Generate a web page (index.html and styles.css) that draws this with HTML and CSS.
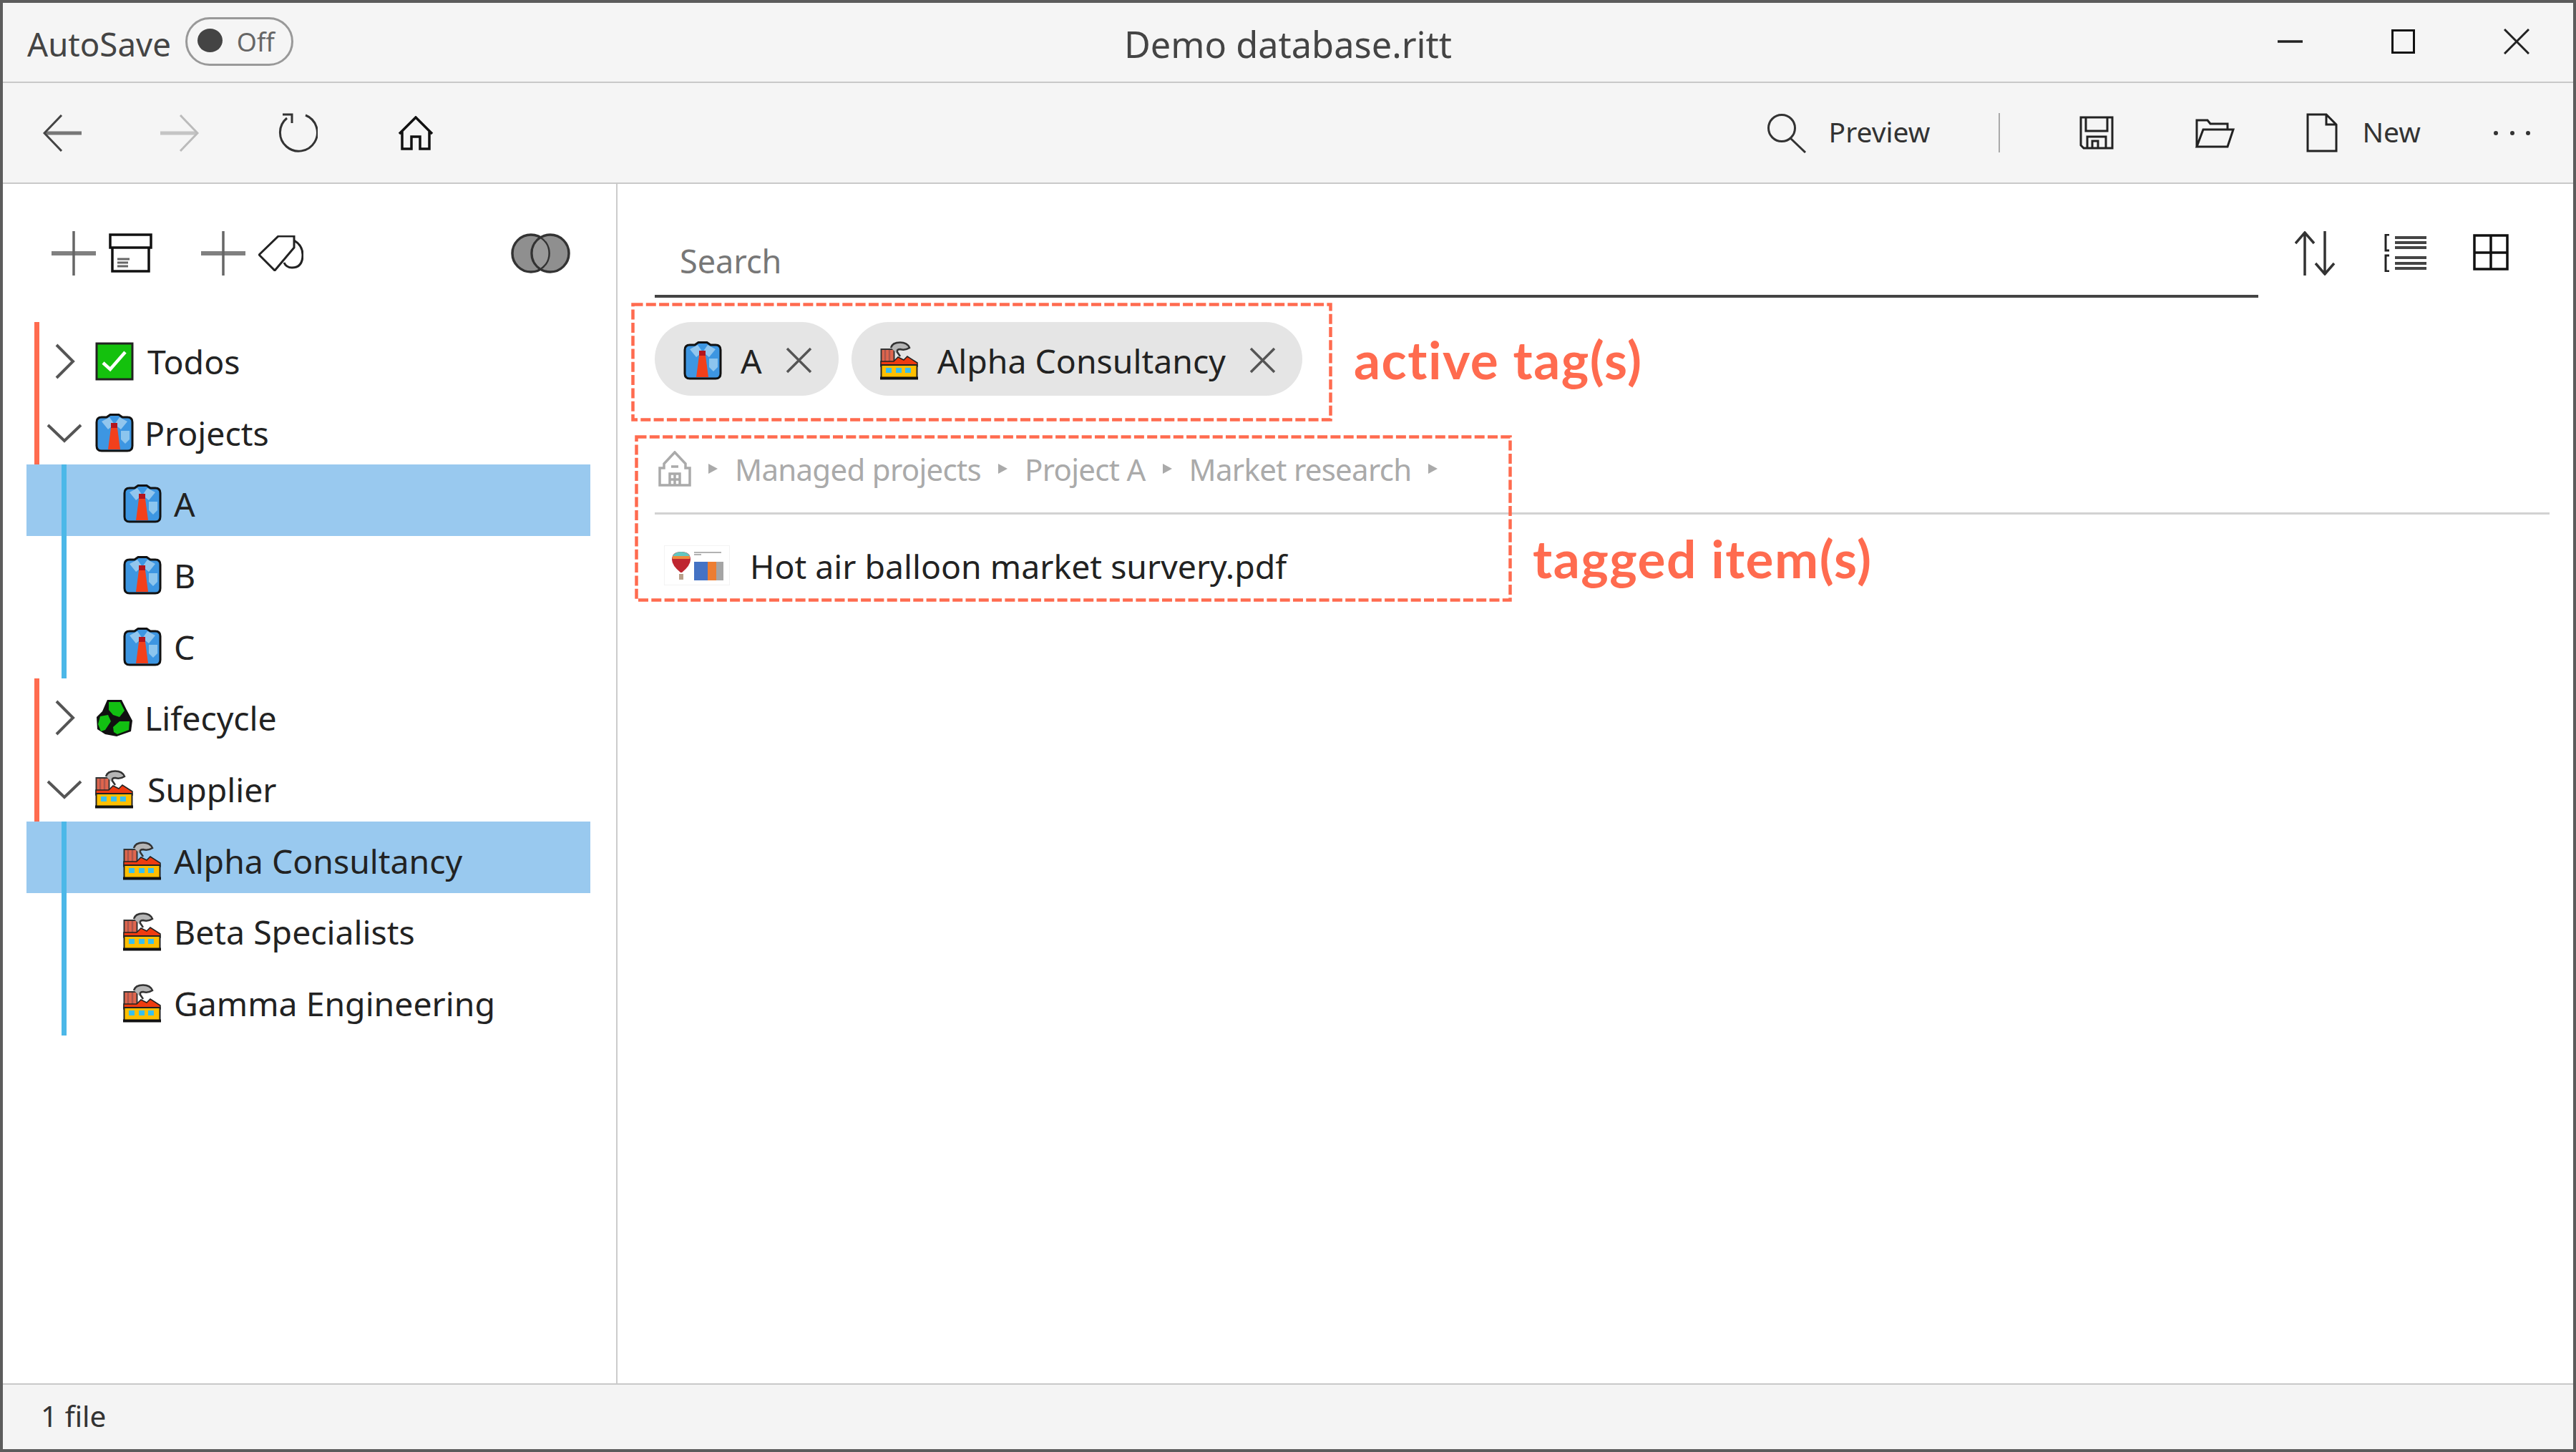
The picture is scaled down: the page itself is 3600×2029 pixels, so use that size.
FILE: index.html
```html
<!DOCTYPE html>
<html lang="en">
<head>
    <meta charset="UTF-8">
    <title>Demo database.ritt</title>
    <link rel="stylesheet" href="styles.css">
</head>
<body>
<svg class="defs" xmlns="http://www.w3.org/2000/svg">
    <symbol id="i-shirt" viewBox="0 0 54 54">
        <path d="M16 5 21 1.500H33L38 5H45Q52 5 52 12V45Q52 52 45 52H9Q2 52 2 45V12Q2 5 9 5Z" fill="#3d96e2" stroke="#111" stroke-width="3"/>
        <path d="M9 11 20 5 27 15 18 22ZM45 11 34 5 27 15 36 22Z" fill="#92c6ee"/>
        <rect x="22" y="13" width="9" height="8" fill="#b3141c"/>
        <path d="M22 20H31L35 50H18Z" fill="#f2401c"/>
        <path d="M36 24H48V36L42 42 36 36Z" fill="#8cc5ee"/>
    </symbol>
    <symbol id="i-factory" viewBox="0 0 54 54">
        <rect x="1.500" y="11" width="18" height="22" fill="#e0664e" stroke="#333" stroke-width="2"/>
        <path d="M7 12V30M13 12V30" stroke="#a9564c" stroke-width="2.500"/>
        <path d="M15 9Q17 1.500 28 1.500 38 1.500 41 9 35 13 28 11 23 11 24 15L28 21" fill="#b5b5b5" stroke="#333" stroke-width="2.500"/>
        <path d="M19 28 25 22 33 26 38 21 52 30V35H1V28Z" fill="#ef3c10" stroke="#222" stroke-width="1.500"/>
        <rect x="1.500" y="33" width="50" height="18" fill="#ffbf00" stroke="#222" stroke-width="2"/>
        <path d="M0 51.500H53" stroke="#111" stroke-width="4"/>
        <rect x="8" y="37" width="8" height="7" fill="#38c0ee"/>
        <rect x="22" y="37" width="8" height="7" fill="#38c0ee"/>
        <rect x="35" y="37" width="8" height="7" fill="#38c0ee"/>
    </symbol>
    <symbol id="i-recycle" viewBox="0 0 54 54">
        <path d="M17 2H37L44 16 52 31 50 46 30 53 14 50 3 43 2 26 10 18Z" fill="#111"/>
        <g fill="#12c012">
            <path d="M19 5H35L41 17 34 26 25 23 19 16Z"/>
            <path d="M7 25 18 23 22 32 14 44 8 46 4 36Z"/>
            <path d="M25 40 34 32H48L47 44 31 50 26 47Z"/>
        </g>
    </symbol>
    <symbol id="i-todo" viewBox="0 0 54 54">
        <rect x="2" y="2" width="50" height="50" fill="#14c10d" stroke="#222" stroke-width="3"/>
        <path d="M11 29 21 38 42 14" fill="none" stroke="#fff" stroke-width="4.500"/>
    </symbol>
    <symbol id="i-right" viewBox="0 0 60 60">
        <path d="M19 7 42 30 19 53" fill="none" stroke="#555" stroke-width="4"/>
    </symbol>
    <symbol id="i-down" viewBox="0 0 60 60">
        <path d="M7 19 30 41 53 19" fill="none" stroke="#555" stroke-width="4"/>
    </symbol>
    <symbol id="i-plus" viewBox="0 0 62 62">
        <path d="M0 31H62" stroke="#808080" stroke-width="6"/>
        <path d="M31 0V62" stroke="#666" stroke-width="3.500"/>
    </symbol>
    <symbol id="i-x" viewBox="0 0 37 37">
        <path d="M2 2 35 35M35 2 2 35" stroke="#555" stroke-width="3.500"/>
    </symbol>
</svg>

<div class="window">
    <div class="titlebar">
        <div class="autosave">
            <span>AutoSave</span>
            <div class="toggle"><i class="toggle-dot"></i><span>Off</span></div>
        </div>
        <div class="title">Demo database.ritt</div>
        <div class="winbtns">
            <svg width="35" height="4"><path d="M0 2H35" stroke="#222" stroke-width="3.500"/></svg>
            <svg width="33" height="34"><rect x="1.500" y="1.500" width="30" height="31" fill="none" stroke="#111" stroke-width="3"/></svg>
            <svg width="36" height="36"><path d="M1 1 35 35M35 1 1 35" stroke="#222" stroke-width="3"/></svg>
        </div>
    </div>

    <div class="toolbar">
        <div class="nav">
            <svg width="54" height="52"><path d="M54 26H3" stroke="#777" stroke-width="5"/><path d="M26 1 2 26 26 51" fill="none" stroke="#444" stroke-width="3"/></svg>
            <svg width="54" height="52"><path d="M0 26H51" stroke="#c4c4c4" stroke-width="5"/><path d="M28 1 52 26 28 51" fill="none" stroke="#bbb" stroke-width="3"/></svg>
            <svg width="56" height="56"><path d="M39 3A26 26 0 1 1 13 7" fill="none" stroke="#333" stroke-width="3"/><path d="M7 2H20V14" fill="none" stroke="#333" stroke-width="3"/></svg>
            <svg class="nav-home" width="50" height="48"><path d="M2 25 25 2 48 25M6 22V46H19V29H31V46H44V22" fill="none" stroke="#111" stroke-width="3.500"/></svg>
        </div>
        <div class="actions">
            <svg width="56" height="56"><circle cx="21" cy="21" r="18.500" fill="none" stroke="#333" stroke-width="3"/><path d="M33 35 54 55" stroke="#333" stroke-width="3"/></svg>
            <span class="act-text act-preview">Preview</span>
            <i class="act-sep"></i>
            <svg class="act-save" width="48" height="47"><path d="M2 2H46V45H6L2 41ZM9 2V21H39V2M11 45V29H37V45M18 45V35H26V45" fill="none" stroke="#222" stroke-width="3"/></svg>
            <svg class="act-open" width="56" height="42"><path d="M3 40V3H18L22 8H46V15M3 40 12 16H54L46 40Z" fill="none" stroke="#222" stroke-width="3"/></svg>
            <svg class="act-new" width="44" height="55"><path d="M2 2H28L42 16V53H2ZM28 2V16H42" fill="none" stroke="#222" stroke-width="3"/></svg>
            <span class="act-text act-newtext">New</span>
            <svg class="act-more" width="51" height="6"><circle cx="3" cy="3" r="3" fill="#333"/><circle cx="26" cy="3" r="3" fill="#333"/><circle cx="48" cy="3" r="3" fill="#333"/></svg>
        </div>
    </div>

    <div class="content">
        <div class="sidebar">
            <div class="side-head">
                <svg width="62" height="62"><use href="#i-plus"/></svg>
                <svg class="head-icon" width="61" height="55"><path d="M2 2H59V20H2ZM5 20V53H56V20" fill="none" stroke="#111" stroke-width="3.500"/><path d="M12 36H29M12 41H27M12 46H27" stroke="#666" stroke-width="3"/></svg>
                <svg class="head-plus" width="62" height="62"><use href="#i-plus"/></svg>
                <svg class="head-icon" width="63" height="50"><path d="M1 27 28 1H50V17L23 49Z" fill="none" stroke="#222" stroke-width="3"/><path d="M50 7Q62 14 62 27 62 45 47 45 39 45 36 38" fill="none" stroke="#222" stroke-width="3"/></svg>
                <svg class="head-venn" width="83" height="56"><ellipse cx="28" cy="28" rx="26" ry="26" fill="#8f8f8f" stroke="#333" stroke-width="3.500"/><ellipse cx="55" cy="28" rx="26" ry="26" fill="#8f8f8f" stroke="#333" stroke-width="3.500"/><path d="M41.500 6A26 26 0 0 1 41.500 50A26 26 0 0 1 41.500 6Z" fill="#999" stroke="#333" stroke-width="2.500"/></svg>
            </div>

            <div class="tree">
                <div class="top-group">
                    <div class="row"><svg class="chev"><use href="#i-right"/></svg><svg class="tag-icon"><use href="#i-todo"/></svg><span>Todos</span></div>
                    <div class="row"><svg class="chev"><use href="#i-down"/></svg><svg class="tag-icon"><use href="#i-shirt"/></svg><span class="tight">Projects</span></div>
                </div>
                <div class="row-child selected"><div class="child-inner"><svg class="tag-icon"><use href="#i-shirt"/></svg><span>A</span></div></div>
                <div class="row-child"><div class="child-inner"><svg class="tag-icon"><use href="#i-shirt"/></svg><span>B</span></div></div>
                <div class="row-child"><div class="child-inner"><svg class="tag-icon"><use href="#i-shirt"/></svg><span>C</span></div></div>
                <div class="top-group">
                    <div class="row"><svg class="chev"><use href="#i-right"/></svg><svg class="tag-icon"><use href="#i-recycle"/></svg><span class="tight">Lifecycle</span></div>
                    <div class="row"><svg class="chev"><use href="#i-down"/></svg><svg class="tag-icon"><use href="#i-factory"/></svg><span>Supplier</span></div>
                </div>
                <div class="row-child selected"><div class="child-inner"><svg class="tag-icon"><use href="#i-factory"/></svg><span>Alpha Consultancy</span></div></div>
                <div class="row-child"><div class="child-inner"><svg class="tag-icon"><use href="#i-factory"/></svg><span>Beta Specialists</span></div></div>
                <div class="row-child"><div class="child-inner"><svg class="tag-icon"><use href="#i-factory"/></svg><span>Gamma Engineering</span></div></div>
            </div>
        </div>

        <div class="main">
            <div class="search-row">
                <div class="search">Search</div>
                <svg class="view-sort" width="58" height="62"><path d="M14 62V2M1 17 14 2 27 17M42 0V60M29 45 42 60 55 45" fill="none" stroke="#333" stroke-width="3.500"/></svg>
                <svg class="view-list" width="59" height="53"><path d="M7 1H2V23H7M7 30H2V52H7" fill="none" stroke="#222" stroke-width="3"/><path d="M15 5H59M15 12H59M15 19H59M15 33H59M15 41H59M15 48H59" stroke="#444" stroke-width="4"/></svg>
                <svg class="view-grid" width="50" height="51"><path d="M2 2H48V49H2ZM25 2V49M2 26H48" fill="none" stroke="#111" stroke-width="3.500"/></svg>
            </div>

            <div class="chips">
                <div class="chip">
                    <svg class="tag-icon"><use href="#i-shirt"/></svg>
                    <span class="chip-text">A</span>
                    <svg class="chip-x"><use href="#i-x"/></svg>
                </div>
                <div class="chip">
                    <svg class="tag-icon"><use href="#i-factory"/></svg>
                    <span class="chip-text">Alpha Consultancy</span>
                    <svg class="chip-x"><use href="#i-x"/></svg>
                </div>
            </div>

            <div class="crumbs">
                <svg width="47" height="50"><path d="M24 2 9 18V24H3V48H45V24H39V18ZM17 48V32H31V48M24 32V48M17 40H31M19 22H29" fill="none" stroke="#aaa" stroke-width="3.500"/></svg>
                <i class="crumb-arrow"></i>
                <span>Managed projects</span>
                <i class="crumb-arrow"></i>
                <span>Project A</span>
                <i class="crumb-arrow"></i>
                <span>Market research</span>
                <i class="crumb-arrow"></i>
            </div>
            <div class="sep"></div>

            <div class="file">
                <svg class="thumb" width="92" height="56">
                    <rect x="0.500" y="0.500" width="91" height="55" fill="#fff" stroke="#f3f3f3"/>
                    <path d="M11 20Q11 9 24 9 37 9 37 20 37 28 25 38H23Q11 28 11 20Z" fill="#bf2630"/>
                    <path d="M12 15Q15 9 24 9 33 9 36 15Z" fill="#62c6c0"/>
                    <path d="M12 15H36V19H12Z" fill="#ef8a3c"/>
                    <rect x="21" y="40" width="6" height="8" fill="#b9a08a"/>
                    <path d="M42 10H80M42 13H52" stroke="#999" stroke-width="1.500"/>
                    <rect x="42" y="23" width="19" height="26" fill="#4472c4"/>
                    <rect x="61" y="23" width="12" height="26" fill="#ed7d31"/>
                    <rect x="73" y="23" width="10" height="26" fill="#a5a5a5"/>
                </svg>
                <span class="file-name">Hot air balloon market survery.pdf</span>
            </div>
        </div>
    </div>

    <div class="statusbar">1 file</div>

    <svg class="note-box note-box-tags" width="980" height="166"><rect x="2.500" y="2.500" width="975" height="161" fill="none" stroke="#ff6b4f" stroke-width="4.500" stroke-dasharray="14 4.300"/></svg>
    <svg class="note-box note-box-items" width="1226" height="233"><rect x="2.500" y="2.500" width="1221" height="228" fill="none" stroke="#ff6b4f" stroke-width="4.500" stroke-dasharray="14 4.300"/></svg>
    <div class="note note-tags">active tag(s)</div>
    <div class="note note-items">tagged item(s)</div>
</div>
</body>
</html>
```

FILE: styles.css
```css
*{
    margin:0;
    padding:0;
    box-sizing:border-box;
}

body{
    font-family:"Noto Sans","Open Sans",sans-serif;
    color:#222;
    background:#fff;
}

svg{
    display:block;
    flex:none;
}

.defs{
    display:none;
}

.window{
    position:relative;          /*annotations sit on top of this*/
    width:3600px;
    height:2029px;
    border:4px solid #5c5c5c;
    display:flex;
    flex-direction:column;
    font-size:46.4px;
    overflow:hidden;
}

/* title bar */
.titlebar{
    height:112px;
    flex:none;
    display:grid;
    grid-template-columns:1fr auto 1fr;
    align-items:center;
    padding-top:4px;
    background:#f5f5f5;
    border-bottom:2px solid #c9c9c9;
    color:#444;
}
.autosave{
    display:flex;
    align-items:center;
    padding-left:34px;
    font-size:45.6px;
}
.toggle{
    margin-left:20px;
    width:151px;
    height:68px;
    margin-top:-6px;
    border:3px solid #999;
    border-radius:34px;
    display:flex;
    align-items:center;
    padding-left:14px;
    font-size:36px;
    color:#666;
}
.toggle-dot{
    width:35px;
    height:33px;
    border-radius:50%;
    background:#444;
    margin-right:20px;
    margin-top:-4px;
}
.title{
    font-size:50.5px;
    color:#444;
}
.winbtns{
    display:flex;
    align-items:center;
    justify-content:flex-end;
    gap:124px;
    padding-right:61px;
    margin-top:-6px;
}

/* toolbar */
.toolbar{
    height:141px;
    flex:none;
    display:flex;
    align-items:center;
    justify-content:space-between;
    background:#f5f5f5;
    border-bottom:2px solid #c9c9c9;
    padding:0 60px 0 56px;
}
.nav{
    display:flex;
    align-items:center;
    gap:110px;
}
.nav-home{
    margin-left:2px;
}
.actions{
    display:flex;
    align-items:center;
    font-size:39px;
    color:#333;
}
.act-text{
    margin-top:-4px;
}
.act-preview{
    margin-left:31px;
}
.act-sep{
    width:2px;
    height:55px;
    background:#aaa;
    margin-left:96px;
}
.act-save{
    margin-left:111px;
}
.act-open{
    margin-left:113px;
}
.act-new{
    margin-left:100px;
}
.act-newtext{
    margin-left:34px;
}
.act-more{
    margin-left:102px;
}

/* left panel */
.content{
    flex:1;
    display:flex;
    min-height:0;
}
.sidebar{
    width:859px;
    flex:none;
    border-right:2px solid #ccc;
}
.side-head{
    height:193px;
    display:flex;
    align-items:center;
    padding:0 64px 0 68px;
}
.head-icon{
    margin-left:18px;
}
.head-plus{
    margin-left:68px;
}
.head-venn{
    margin-left:auto;
}

.tree{
    width:788px;
    margin-left:33px;
}
.top-group{
    margin-left:11px;
    border-left:7px solid #ff6b4f;
}
.row{
    height:99.7px;
    padding:10px 0 0 5px;
    display:flex;
    align-items:center;
}
.tight{
    margin-left:-4px;
}
.chev{
    width:60px;
    height:60px;
    margin-right:13px;
}
.tag-icon{
    width:54px;
    height:54px;
    margin-right:19px;
}
.row-child{
    height:99.7px;
    padding-left:49px;
    display:flex;
}
.row-child.selected{
    background:#99c9ef;
}
.child-inner{
    flex:1;
    display:flex;
    align-items:center;
    padding:10px 0 0 79px;
    border-left:7px solid #4cb8e8;
}
.child-inner .tag-icon{
    margin-right:17px;
}

/* right panel */
.main{
    flex:1;
    min-width:0;
}
.search-row{
    height:159px;
    display:flex;
    align-items:flex-start;
    padding-left:52px;
}
.search{
    flex:none;
    width:2241px;
    height:89px;
    margin-top:70px;
    padding:8px 0 0 35px;
    border-bottom:4px solid #444;
    line-height:60px;
    font-size:45px;
    color:#777;
}
.view-sort{
    margin:66px 0 0 51px;
}
.view-list{
    margin:70px 0 0 67px;
}
.view-grid{
    margin:70px 0 0 65px;
}

.chips{
    display:flex;
    gap:18px;
    margin-top:34px;
    padding-left:52px;
}
.chip{
    height:103px;
    display:flex;
    align-items:center;
    padding:4px 37px 0 40px;
    background:#e5e5e5;
    border-radius:52px;
}
.chip .tag-icon{
    margin-right:26px;
}
.chip-x{
    width:37px;
    height:37px;
    margin-left:33px;
}

.crumbs{
    height:60px;
    margin-top:72px;
    padding-left:56px;
    display:flex;
    align-items:center;
    gap:24px;
    font-size:42px;
    letter-spacing:-0.7px;
    color:#aaa;
}
.crumb-arrow{
    width:0;
    height:0;
    border-left:13px solid #aaa;
    border-top:7px solid transparent;
    border-bottom:7px solid transparent;
}
.sep{
    height:3px;
    margin:31px 33px 0 52px;
    background:#d2d2d2;
}
.file{
    display:flex;
    align-items:center;
    margin:38px 0 0 65px;
}
.thumb{
    margin-right:28px;
}
.file-name{
    padding-top:2px;
}

.statusbar{
    height:92px;
    flex:none;
    display:flex;
    align-items:center;
    padding:0 0 3px 53px;
    background:#f4f4f4;
    border-top:2px solid #c9c9c9;
    font-size:40.5px;
    color:#333;
}

/* red annotations on top of the app */
.note-box{
    position:absolute;
}
.note-box-tags{
    left:878px;
    top:419px;
}
.note-box-items{
    left:883px;
    top:604px;
}
.note{
    position:absolute;
    font-family:"Lato",sans-serif;
    font-weight:700;
    font-size:73px;
    letter-spacing:1.5px;
    line-height:80px;
    color:#ff6b4f;
}
.note-tags{
    left:1888px;
    top:458px;
}
.note-items{
    left:2138px;
    top:736px;
}
```
